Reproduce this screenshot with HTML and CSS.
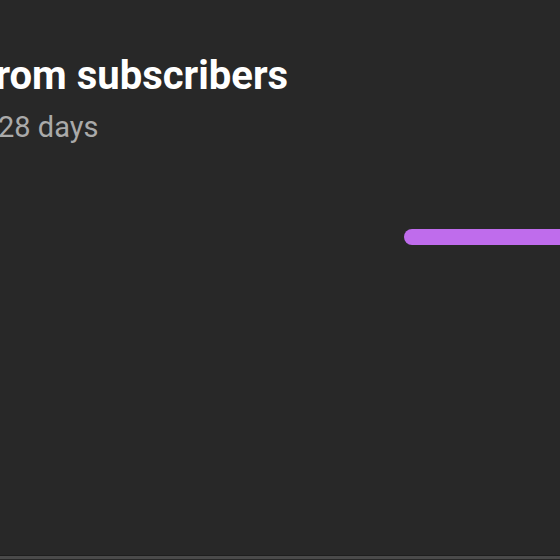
FILE: index.html
```html
<!DOCTYPE html>
<html lang="en">
<head>
  <meta charset="UTF-8">
  <title>Views from subscribers</title>
  <link rel="stylesheet" href="styles.css">
</head>
<body>
  <div class="card">
    <div class="card-head">
      <h2 class="title">Views from subscribers</h2>
      <p class="subtitle">Last 28 days</p>
    </div>
    <div class="chart">
      <div class="bar"></div>
    </div>
  </div>
</body>
</html>
```

FILE: styles.css
```css
* {
  margin: 0;
  padding: 0;
  box-sizing: border-box;
}
html, body {
  height: 100%;
  overflow: hidden;
}
body {
  background: #282828;
  font-family: Roboto, "Liberation Sans", sans-serif;
}
.card {
  height: 556px;
  border-bottom: 1px solid #1e1e1e;
  box-shadow: 0 3px 0 #4a4a4a;
}
.card-head {
  padding-top: 53px;
}
.title {
  color: #fff;
  font-size: 40px;
  font-weight: 700;
  line-height: 46px;
  margin-left: -137px;
  white-space: nowrap;
}
.subtitle {
  color: #aaa;
  font-size: 29px;
  line-height: 34px;
  margin-top: 11px;
  margin-left: -65px;
  white-space: nowrap;
}
.chart {
  padding-top: 85px;
  padding-left: 404px;
}
.bar {
  height: 16px;
  background: #bf6cec;
  border-radius: 8px 0 0 8px;
}
```
